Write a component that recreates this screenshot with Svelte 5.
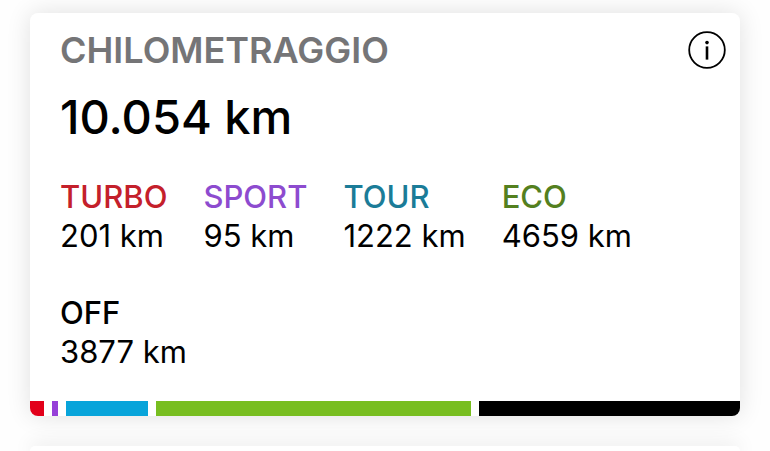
<script>
	const total = '10.054';

	const modes = [
		{ name: 'TURBO', km: 201, text: '#c4202b', bar: '#e2001a' },
		{ name: 'SPORT', km: 95, text: '#8d4bcf', bar: '#9640d8' },
		{ name: 'TOUR', km: 1222, text: '#1b7c98', bar: '#08a4da' },
		{ name: 'ECO', km: 4659, text: '#54801f', bar: '#78be20' },
		{ name: 'OFF', km: 3877, text: '#000000', bar: '#000000' }
	];
</script>

<main>
	<section class="card">
		<header>
			<h2>CHILOMETRAGGIO</h2>
			<button type="button" aria-label="Info">
				<svg viewBox="0 0 38 38" width="38" height="38" aria-hidden="true">
					<circle cx="19" cy="19" r="17.8" fill="none" stroke="currentColor" stroke-width="1.8" />
					<circle cx="19" cy="11.6" r="1.8" />
					<rect x="17.7" y="15.4" width="2.6" height="13.2" />
				</svg>
			</button>
		</header>
		<p class="total">{total} km</p>

		<dl>
			{#each modes as mode}
				<div>
					<dt style="color: {mode.text}">{mode.name}</dt>
					<dd>{mode.km} km</dd>
				</div>
			{/each}
		</dl>

		<div class="bar">
			{#each modes as mode}
				<span style="flex-grow: {mode.km}; background: {mode.bar}"></span>
			{/each}
		</div>
	</section>

	<section class="card next"></section>
</main>

<style>
	:global(body) {
		margin: 0;
		background: #fefefe;
	}
	main {
		display: flex;
		flex-direction: column;
		gap: 30px;
		box-sizing: border-box;
		min-height: 100vh;
		padding: 13px 30px 0;
		font-family: Inter, 'Liberation Sans', sans-serif;
		color: #000;
	}
	.card {
		background: #fff;
		border-radius: 8px;
		box-shadow: 0 0 24px rgba(0, 0, 0, 0.12);
		overflow: hidden;
	}
	.next {
		flex: 1;
		border-radius: 8px 8px 0 0;
		box-shadow: 0 0 20px rgba(0, 0, 0, 0.2);
	}
	header {
		display: flex;
		justify-content: space-between;
		align-items: center;
		padding: 18px 14px 0 30px;
	}
	h2 {
		margin: 0;
		font-size: 36px;
		line-height: 38px;
		font-weight: 600;
		color: #757577;
	}
	button {
		display: flex;
		padding: 0;
		border: none;
		background: none;
		color: #000;
		cursor: pointer;
	}
	.total {
		margin: 18px 30px 0;
		font-size: 47px;
		line-height: 60px;
		font-weight: 500;
	}
	dl {
		display: flex;
		flex-wrap: wrap;
		gap: 38px 36px;
		margin: 30px;
		font-size: 31px;
		line-height: 39px;
	}
	dt {
		font-weight: 500;
	}
	dd {
		margin: 0;
	}
	.bar {
		display: flex;
		gap: 8px;
		height: 15px;
	}
	.bar span {
		flex-basis: 0;
	}
</style>
